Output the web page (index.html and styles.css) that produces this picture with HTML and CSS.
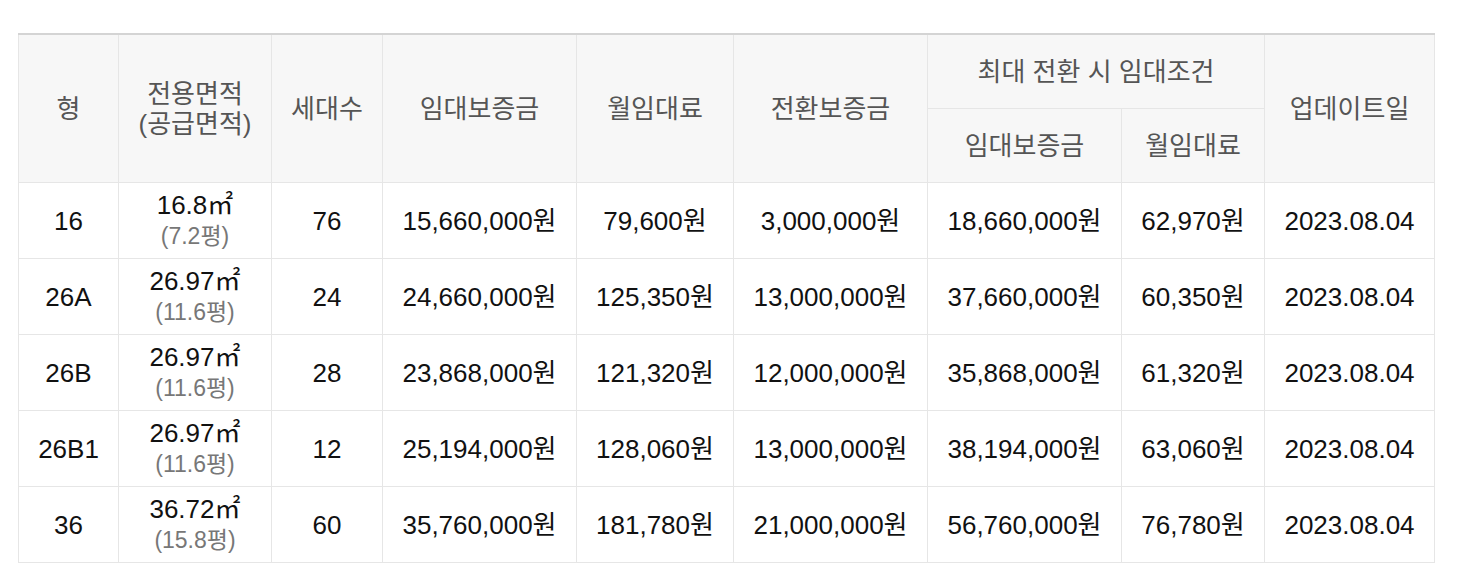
FILE: index.html
```html
<!DOCTYPE html>
<html lang="ko">
<head>
<meta charset="utf-8">
<link rel="stylesheet" href="styles.css">
</head>
<body>
<div class="wrap">
<table class="rent">
  <colgroup>
    <col class="c1"><col class="c2"><col class="c3"><col class="c4"><col class="c5"><col class="c6"><col class="c7"><col class="c8"><col class="c9">
  </colgroup>
  <thead>
    <tr>
      <th rowspan="2">형</th>
      <th rowspan="2">전용면적<br>(공급면적)</th>
      <th rowspan="2">세대수</th>
      <th rowspan="2">임대보증금</th>
      <th rowspan="2">월임대료</th>
      <th rowspan="2">전환보증금</th>
      <th colspan="2">최대 전환 시 임대조건</th>
      <th rowspan="2">업데이트일</th>
    </tr>
    <tr>
      <th>임대보증금</th>
      <th>월임대료</th>
    </tr>
  </thead>
  <tbody>
    <tr>
      <td>16</td>
      <td>16.8㎡<br><span class="sub">(7.2평)</span></td>
      <td>76</td>
      <td>15,660,000원</td>
      <td>79,600원</td>
      <td>3,000,000원</td>
      <td>18,660,000원</td>
      <td>62,970원</td>
      <td>2023.08.04</td>
    </tr>
    <tr>
      <td>26A</td>
      <td>26.97㎡<br><span class="sub">(11.6평)</span></td>
      <td>24</td>
      <td>24,660,000원</td>
      <td>125,350원</td>
      <td>13,000,000원</td>
      <td>37,660,000원</td>
      <td>60,350원</td>
      <td>2023.08.04</td>
    </tr>
    <tr>
      <td>26B</td>
      <td>26.97㎡<br><span class="sub">(11.6평)</span></td>
      <td>28</td>
      <td>23,868,000원</td>
      <td>121,320원</td>
      <td>12,000,000원</td>
      <td>35,868,000원</td>
      <td>61,320원</td>
      <td>2023.08.04</td>
    </tr>
    <tr>
      <td>26B1</td>
      <td>26.97㎡<br><span class="sub">(11.6평)</span></td>
      <td>12</td>
      <td>25,194,000원</td>
      <td>128,060원</td>
      <td>13,000,000원</td>
      <td>38,194,000원</td>
      <td>63,060원</td>
      <td>2023.08.04</td>
    </tr>
    <tr>
      <td>36</td>
      <td>36.72㎡<br><span class="sub">(15.8평)</span></td>
      <td>60</td>
      <td>35,760,000원</td>
      <td>181,780원</td>
      <td>21,000,000원</td>
      <td>56,760,000원</td>
      <td>76,780원</td>
      <td>2023.08.04</td>
    </tr>
  </tbody>
</table>
</div>
</body>
</html>
```
FILE: styles.css
```css
html, body {
  margin: 0;
  padding: 0;
  background: #fff;
}
.wrap {
  padding: 33px 0 0 18px;
}
.rent {
  border-collapse: collapse;
  table-layout: fixed;
  width: 1416px;
  font-family: "Liberation Sans", "Noto Sans CJK KR", sans-serif;
  border-top: 2px solid #d4d4d4;
}
.c1 { width: 100px; }
.c2 { width: 153px; }
.c3 { width: 111px; }
.c4 { width: 194px; }
.c5 { width: 157px; }
.c6 { width: 194px; }
.c7 { width: 194px; }
.c8 { width: 143px; }
.c9 { width: 170px; }
.rent th,
.rent td {
  border: 1px solid #e6e6e6;
  text-align: center;
  vertical-align: middle;
  padding: 0;
}
.rent th {
  background: #f7f7f7;
  color: #555;
  font-weight: normal;
  font-size: 26px;
  line-height: 30px;
  height: 73px;
}
.rent td {
  color: #111;
  font-size: 26px;
  line-height: 30px;
  height: 75px;
}
.rent .sub {
  color: #777;
  font-size: 23px;
}
```
